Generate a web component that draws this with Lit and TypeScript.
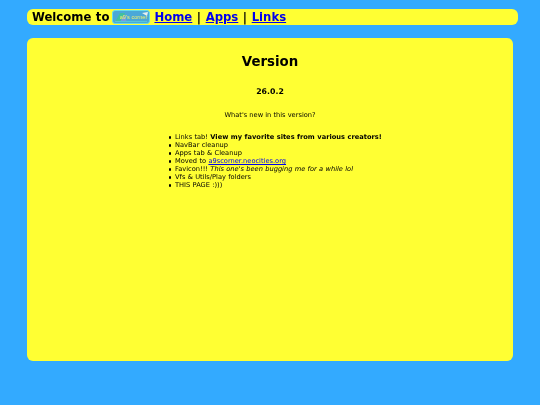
import { LitElement, html, css } from "lit";
import { customElement } from "lit/decorators.js";

@customElement("app-root")
export class AppRoot extends LitElement {
  static styles = css`
    :host { display: block; width: 540px; height: 405px; background: #33aaff; font-family: "DejaVu Sans", sans-serif; color: #000; overflow: hidden; }
    .page { display: flex; flex-direction: column; padding: 9px 22px 0 27px; gap: 13px; }
    nav { height: 16px; background: #ffff33; border-radius: 6px; display: flex; align-items: center; padding-left: 5px; font-size: 11.67px; font-weight: bold; white-space: pre; word-spacing: 0.5px; }
    nav a { color: #0000ee; text-decoration: underline; }
    .navtext { display: flex; align-items: center; filter: blur(0.3px); }
    .logo { margin: 0 4px 0 3px; display: block; flex: none; }
    main { width: 486px; height: 323px; box-sizing: border-box; background: #ffff33; border-radius: 6px; padding-top: 15px; font-size: 6.67px; }
    .content { display: flex; flex-direction: column; align-items: center; filter: blur(0.3px); }
    h1 { margin: 0; font-size: 13.33px; line-height: 17px; }
    h3 { margin: 16px 0 0; font-size: 7.8px; line-height: 11px; }
    p { margin: 14px 0 0; line-height: 8px; }
    ul { margin: 14px 0 0; padding: 0 0 0 148px; align-self: flex-start; list-style: none; line-height: 8px; word-spacing: 0.2px; }
    li { position: relative; }
    li::before { content: ""; position: absolute; left: -6.5px; top: 3px; width: 2.6px; height: 2.6px; border-radius: 50%; background: #000; }
    ul a { color: #0000ee; }
  `;
  render() {
    return html`<div class="page">
      <nav><div class="navtext">Welcome to<svg class="logo" width="38" height="14" viewBox="0 0 38 14"><rect x=".5" y=".5" width="37" height="13" rx="2.5" fill="#4aa8d8" stroke="#66dcec"/><path d="M3 12 L8 3 L13 3 L10 12Z" fill="#3fc0a0"/><path d="M8 12 L12 5 L15 12Z" fill="#7a9ae0"/><path d="M30 3 L36 2 L35 6Z" fill="#e8f0f0"/><path d="M3 11.500 H35" stroke="#58c8d8" stroke-width="1"/><text x="21.500" y="9.300" text-anchor="middle" font-size="5.600" font-family="Liberation Sans" font-weight="normal" word-spacing="0" fill="#f0f070">a9's corner</text></svg><a href="#">Home</a> | <a href="#">Apps</a> | <a href="#">Links</a></div></nav>
      <main>
        <div class="content">
        <h1>Version</h1>
        <h3>26.0.2</h3>
        <p>What's new in this version?</p>
        <ul>
          <li>Links tab! <b>View my favorite sites from various creators!</b></li>
          <li>NavBar cleanup</li>
          <li>Apps tab &amp; Cleanup</li>
          <li>Moved to <a href="#">a9scorner.neocities.org</a></li>
          <li>Favicon!!! <i>This one's been bugging me for a while lol</i></li>
          <li>Vfs &amp; Utils/Play folders</li>
          <li>THIS PAGE :)))</li>
        </ul>
        </div>
      </main>
    </div>`;
  }
}
